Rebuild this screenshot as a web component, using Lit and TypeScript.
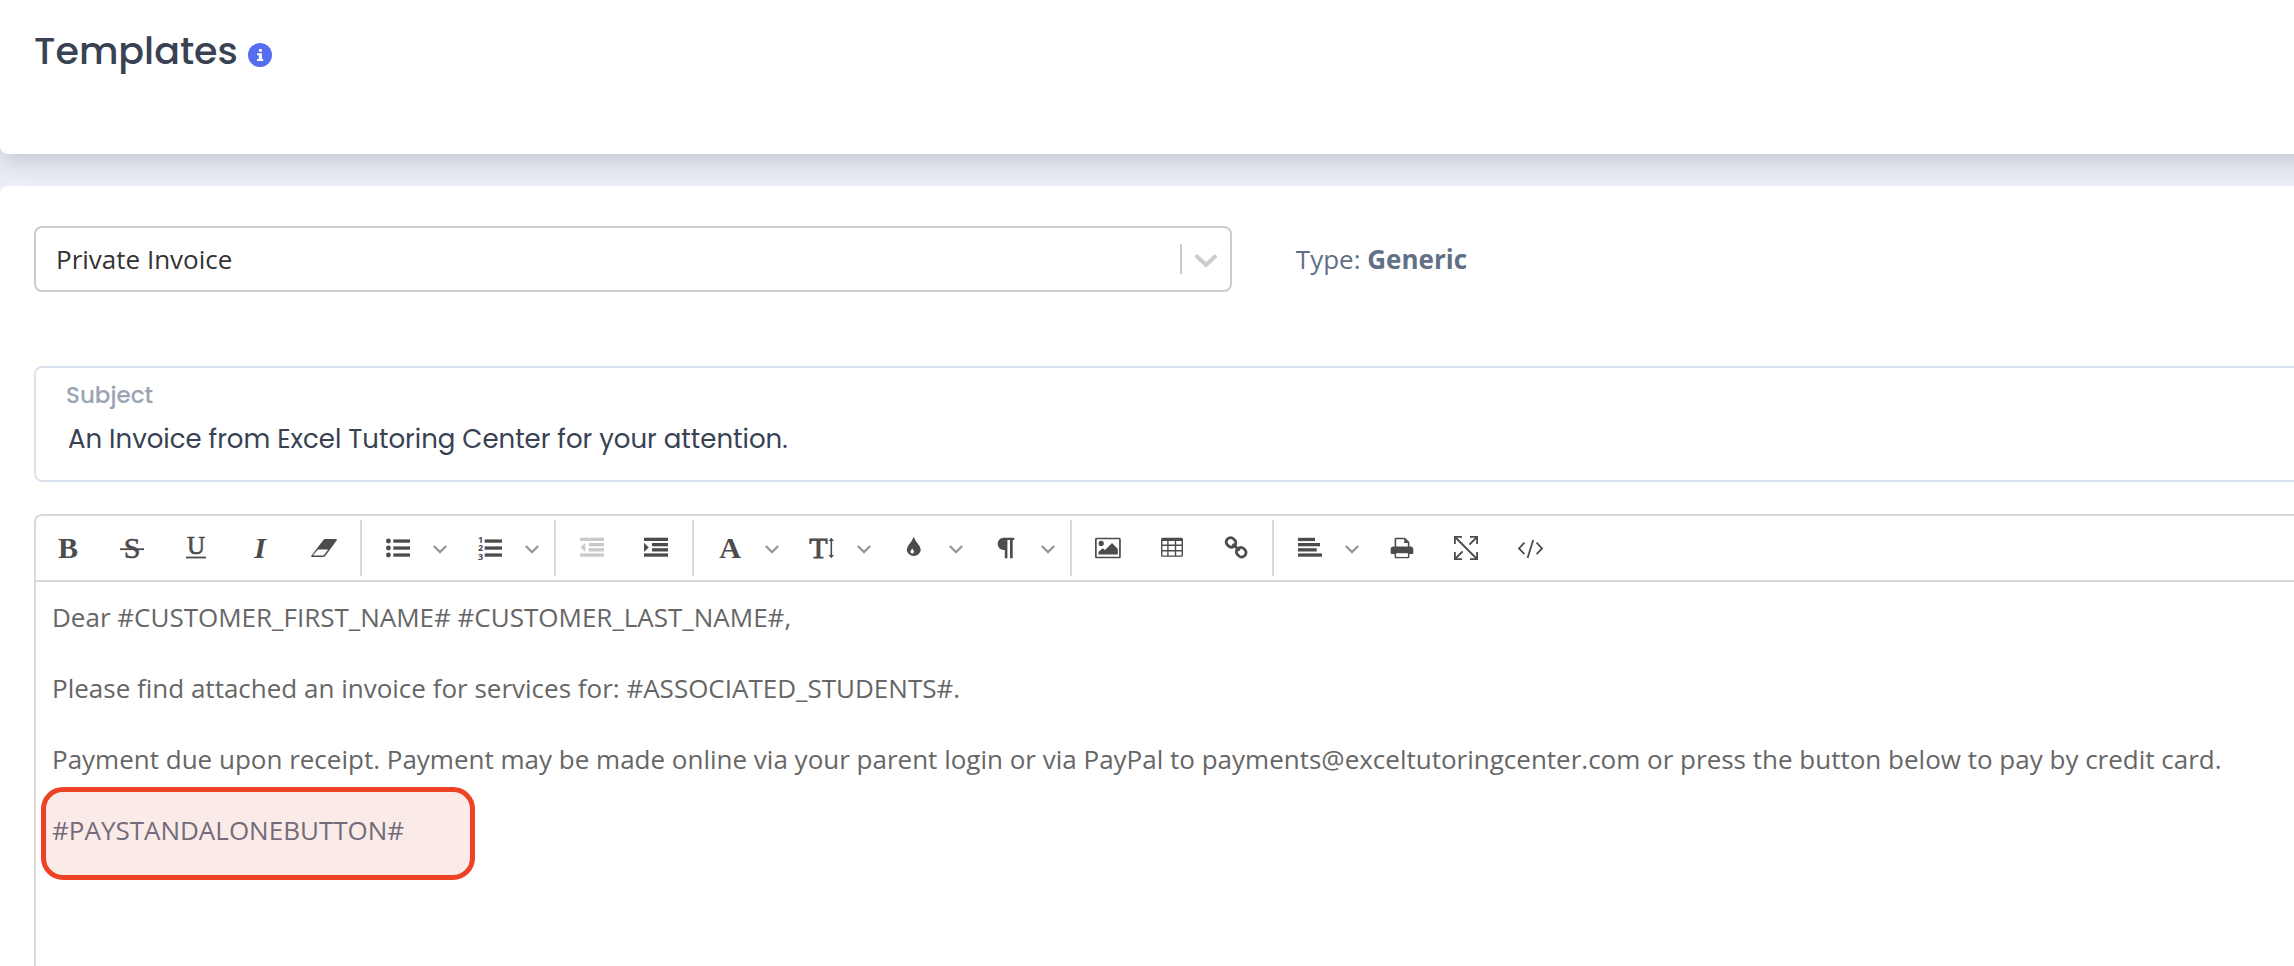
import { LitElement, html, svg, css, nothing } from "lit";
import type { SVGTemplateResult } from "lit";
import { customElement, property, state } from "lit/decorators.js";

interface Tool {
  label: string;
  icon: SVGTemplateResult;
  menu?: boolean;
  disabled?: boolean;
}

// Icons are drawn on a 40 x 40 grid whose origin is the centre of the button.
const bars = (rows: number[][]) =>
  rows.map(([x, y, w]) => svg`<rect x=${x} y=${y} width=${w} height="3.3"></rect>`);

const glyph = (text: string, style: string, y = 10) =>
  svg`<text class=${style} x="0" y=${y} text-anchor="middle">${text}</text>`;

const icons = {
  bold: svg`${glyph("B", "serif bold")}`,
  strike: svg`${glyph("S", "serif")}<rect x="-12" y="0.3" width="24" height="1.8"></rect>`,
  underline: svg`${glyph("U", "serif small", 6)}<rect x="-10" y="8.6" width="20" height="1.8"></rect>`,
  italic: svg`${glyph("I", "serif bold italic")}`,
  eraser: svg`
    <path d="M1.5-9H12Q13.6-9 12.6-7.4L1.6 7.4Q.6 9-1.2 9H-11.8Q-13.6 9-12.4 7.4L-1-7.6Q0-9 1.5-9Z"></path>
    <path class="paper" d="M-6 1.6H3.4Q4 1.6 3.6 2.2L.2 6.8Q-.3 7.4-1 7.4H-10.4Q-11 7.4-10.6 6.8Z"></path>`,
  bullets: svg`
    <circle cx="-9.6" cy="-7" r="2.4"></circle><circle cx="-9.6" cy="0" r="2.4"></circle>
    <circle cx="-9.6" cy="7" r="2.4"></circle>
    ${bars([[-4.7, -8.6, 16.7], [-4.7, -1.6, 16.7], [-4.7, 5.4, 16.7]])}`,
  numbers: svg`
    <text class="digit" x="-12" y="-5.4">1</text><text class="digit" x="-12" y="3.3">2</text>
    <text class="digit" x="-12" y="12">3</text>
    ${bars([[-5.3, -8.6, 17.3], [-5.3, -1.6, 17.3], [-5.3, 5.4, 17.3]])}`,
  outdent: svg`
    ${bars([[-12, -10.3, 24], [-3.3, -5, 15.3], [-3.3, 0.2, 15.3], [-12, 5.4, 24]])}
    <path d="M-11.3-.6-6.7-5.2V4Z"></path>`,
  indent: svg`
    ${bars([[-12, -10.3, 24], [-4, -5, 16], [-4, 0.2, 16], [-12, 5.4, 24]])}
    <path d="M-7.2-.6-12-5.2V4Z"></path>`,
  font: svg`${glyph("A", "serif bold")}`,
  size: svg`
    <text class="serif medium" x="-3.6" y="10" text-anchor="middle">T</text>
    <path d="M9.3-10.3 12-7H10.1V7H12L9.3 10.3 6.6 7H8.5V-7H6.6Z"></path>`,
  color: svg`
    <path d="M-.3-11.3Q1-7.6 4.4-3.6 6.8-.7 6.8 1.9A7.1 6.8 0 0 1-7.3 1.9Q-7.3-.7-5-3.6-1.6-7.6-.3-11.3Z"></path>
    <path class="paper" d="M-1.8.2Q-1.4 1.4-.3 2.7A1.8 1.8 0 1 1-3.3 2.7Q-2.2 1.4-1.8.2Z"></path>`,
  paragraph: svg`
    <path d="M8.3-10.3V-8H6.7V10.3H4V-8H1.4V10.3H-1.2V2H-2.6A5.7 6.1 0 0 1-2.6-10.3Z"></path>`,
  image: svg`
    <path fill-rule="evenodd" d="M-11.5-10.3H11.3Q12.8-10.3 12.8-8.8V8.8Q12.8 10.3 11.3 10.3H-11.5Q-13 10.3-13 8.8V-8.8Q-13-10.3-11.5-10.3ZM-11.3-8.7V8.7H11.1V-8.7Z"></path>
    <circle cx="-6.8" cy="-4.6" r="2.6"></circle>
    <path d="M-9.6 6.6V4L-5.3.2-3 2 4-4.9 9.8 1V6.6Z"></path>`,
  table: svg`
    <path fill-rule="evenodd" d="M-9.5-10.2H9.5Q11-10.2 11-8.7V7.3Q11 8.8 9.5 8.8H-9.5Q-11 8.8-11 7.3V-8.7Q-11-10.2-9.5-10.2ZM-9.6-7V-3.4H-4.8V-7ZM-3.4-7V-3.4H2.8V-7ZM4.2-7V-3.4H9.6V-7ZM-9.6-2V2H-4.8V-2ZM-3.4-2V2H2.8V-2ZM4.2-2V2H9.6V-2ZM-9.6 3.4V7.4H-4.8V3.4ZM-3.4 3.4V7.4H2.8V3.4ZM4.2 3.4V7.4H9.6V3.4Z"></path>`,
  link: svg`
    <g class="line" stroke-width="2.8">
      <rect x="-4.9" y="-4.3" width="9.8" height="8.6" rx="4" transform="translate(-5 -5.6) rotate(45)"></rect>
      <rect x="-4.9" y="-4.3" width="9.8" height="8.6" rx="4" transform="translate(5.2 4.2) rotate(45)"></rect>
      <path d="M-3.4-4 3.6 2.6"></path>
    </g>`,
  align: svg`${bars([[-12, -10.2, 17], [-12, -5, 22], [-12, 0.2, 18.7], [-12, 5.4, 24]])}`,
  print: svg`
    <path d="M-9-1.5H9Q11.3-1.5 11.3 1V5Q11.3 6 10.3 6H-10.3Q-11.3 6-11.3 5V1Q-11.3-1.5-9-1.5Z"></path>
    <path fill-rule="evenodd" d="M-7.4 0V-9Q-7.4-10.3-6.2-10.3H3L7.4-6V0H5.8V-5H2.2V-8.7H-5.8V0Z"></path>
    <path fill-rule="evenodd" d="M-7.4 3.6H7.4V9.2Q7.4 10.3 6.3 10.3H-6.3Q-7.4 10.3-7.4 9.2ZM-5.8 5V8.7H5.8V5Z"></path>
    <path class="paper" d="M-5.8 5.2H5.8V8.7H-5.8Z"></path>`,
  fullscreen: svg`
    <g class="line" stroke-width="1.8">
      <path d="M-11.1-4V-11.1H-4M4-11.1H11.1V-4M11.1 4V11.1H4M-4 11.1H-11.1V4"></path>
      <path d="M-11-11 11 11M11-11 3.4-3.4M-11 11-3.4 3.4"></path>
    </g>`,
  code: svg`
    <g class="line" stroke-width="1.8">
      <path d="M-5.6-5.4-11 .4-5.6 6.2M6.6-5.4 12 .4 6.6 6.2M3.2-8-2.4 10"></path>
    </g>`,
};

const toolGroups: Tool[][] = [
  [
    { label: "Bold", icon: icons.bold },
    { label: "Strikethrough", icon: icons.strike },
    { label: "Underline", icon: icons.underline },
    { label: "Italic", icon: icons.italic },
    { label: "Clear formatting", icon: icons.eraser },
  ],
  [
    { label: "Bulleted list", icon: icons.bullets, menu: true },
    { label: "Numbered list", icon: icons.numbers, menu: true },
  ],
  [
    { label: "Decrease indent", icon: icons.outdent, disabled: true },
    { label: "Increase indent", icon: icons.indent },
  ],
  [
    { label: "Font", icon: icons.font, menu: true },
    { label: "Font size", icon: icons.size, menu: true },
    { label: "Text colour", icon: icons.color, menu: true },
    { label: "Paragraph format", icon: icons.paragraph, menu: true },
  ],
  [
    { label: "Insert image", icon: icons.image },
    { label: "Insert table", icon: icons.table },
    { label: "Insert link", icon: icons.link },
  ],
  [
    { label: "Align", icon: icons.align, menu: true },
    { label: "Print", icon: icons.print },
    { label: "Full screen", icon: icons.fullscreen },
    { label: "Source", icon: icons.code },
  ],
];

@customElement("editor-toolbar")
export class EditorToolbar extends LitElement {
  @property({ attribute: false }) groups: Tool[][] = [];

  static styles = css`
    :host {
      display: flex;
      border-bottom: 2px solid #d9d9d9;
    }
    .group {
      display: flex;
      height: 64px;
    }
    .group + .group::before {
      content: "";
      width: 2px;
      margin: 4px;
      background: #d9d9d9;
    }
    button {
      display: flex;
      align-items: center;
      justify-content: center;
      width: 64px;
      padding: 0;
      border: 0;
      background: none;
      color: #4c4c4c;
      cursor: pointer;
    }
    button.arrow {
      width: 28px;
      padding-right: 8px;
      color: #999;
    }
    button:disabled {
      color: #c9c9c9;
      cursor: default;
    }
    button:not(:disabled):hover {
      background: #f4f4f4;
    }
    svg {
      flex: none;
      width: 40px;
      height: 40px;
      fill: currentColor;
    }
    .arrow svg {
      width: 20px;
    }
    .paper {
      fill: #fff;
    }
    .line {
      fill: none;
      stroke: currentColor;
    }
    .serif {
      font: 30px "Liberation Serif", serif;
      stroke: currentColor;
      stroke-width: 0.6px;
    }
    .serif.small {
      font-size: 25px;
    }
    .serif.medium {
      stroke-width: 0.9px;
    }
    .serif.bold {
      font-weight: 700;
      stroke: none;
    }
    .serif.italic {
      font-style: italic;
    }
    .digit {
      font: 700 9px "Open Sans", sans-serif;
    }
  `;

  private renderTool(tool: Tool) {
    return html`
      <button type="button" aria-label=${tool.label} ?disabled=${tool.disabled}>
        <svg viewBox="-20 -20 40 40" aria-hidden="true">${tool.icon}</svg>
      </button>
      ${tool.menu
        ? html`<button type="button" class="arrow" aria-label="${tool.label} options">
            <svg viewBox="-10 -20 20 40" aria-hidden="true">
              <path class="line" stroke-width="2.4" d="M-6.2-2 0 4 6.2-2"></path>
            </svg>
          </button>`
        : nothing}
    `;
  }

  render() {
    return this.groups.map(
      (group) => html`<div class="group">${group.map((tool) => this.renderTool(tool))}</div>`
    );
  }
}

@customElement("app-root")
export class AppRoot extends LitElement {
  @state() private subject = "An Invoice from Excel Tutoring Center for your attention.";

  static styles = css`
    :host {
      display: flex;
      flex-direction: column;
      gap: 32px;
      box-sizing: border-box;
      min-height: 100vh;
      overflow: hidden;
      background: #e9eef7;
      font-family: "Open Sans", sans-serif;
      font-size: 26px;
      line-height: 36px;
    }
    * {
      box-sizing: border-box;
    }
    .header {
      display: flex;
      gap: 10px;
      height: 154px;
      margin-right: -40px;
      padding: 26px 34px;
      border-radius: 0 0 0 8px;
      background: #fff;
      box-shadow: 0 8px 24px rgba(40, 40, 50, 0.19);
      color: #384252;
    }
    h1 {
      margin: 0;
      font: 500 38px/50px Poppins, Inter, sans-serif;
    }
    .info {
      align-self: flex-start;
      width: 24px;
      height: 24px;
      margin-top: 17px;
      padding: 0;
      border: 0;
      border-radius: 50%;
      background: #556ef0;
      cursor: pointer;
    }
    .info svg {
      display: block;
      fill: #fff;
    }
    .card {
      position: relative;
      flex: 1;
      display: flex;
      flex-direction: column;
      padding: 40px 0 0 34px;
      border-radius: 8px 0 0 0;
      background: #fff;
    }
    .row {
      display: grid;
      grid-template-columns: 6fr 5fr;
      gap: 64px;
      align-items: center;
      margin-bottom: 74px;
    }
    .picker {
      display: grid;
      align-items: center;
    }
    .picker > * {
      grid-area: 1 / 1;
    }
    select {
      appearance: none;
      width: 100%;
      height: 66px;
      padding: 0 64px 0 20px;
      border: 2px solid #ccc;
      border-radius: 8px;
      background: #fff;
      color: #333;
      font: inherit;
    }
    .indicator {
      display: flex;
      justify-self: end;
      gap: 12px;
      padding-right: 14px;
      pointer-events: none;
    }
    .indicator::before {
      content: "";
      width: 2px;
      background: #ccc;
    }
    .indicator path {
      fill: none;
      stroke: #ccc;
      stroke-width: 4px;
      stroke-linecap: round;
    }
    .type {
      color: #627086;
    }
    .field {
      display: block;
      height: 116px;
      margin-bottom: 32px;
      padding: 9px 30px;
      border: 2px solid #dbe4ee;
      border-right: 0;
      border-radius: 8px 0 0 8px;
      font-family: Poppins, Inter, sans-serif;
    }
    .caption {
      display: block;
      color: #9aa4b2;
      font-size: 23px;
      font-weight: 500;
    }
    .field input {
      display: block;
      width: 100%;
      height: 52px;
      padding: 0 2px;
      border: 0;
      outline: 0;
      background: none;
      color: #384252;
      font: inherit;
    }
    .editor {
      flex: 1;
      border: 2px solid #d9d9d9;
      border-width: 2px 0 0 2px;
      border-radius: 8px 0 0 0;
    }
    .content {
      padding: 17px 16px 0;
      outline: 0;
      color: #666;
    }
    p {
      margin: 0 0 35px;
    }
    .marked {
      position: relative;
      z-index: 0;
      color: #736c7a;
    }
    .highlight {
      position: absolute;
      z-index: -1;
      inset: -25px auto -32px -11px;
      width: 434px;
      border: 5px solid #ee4227;
      border-radius: 22px;
      background: #fbebe8;
      pointer-events: none;
    }
  `;

  render() {
    return html`
      <header class="header">
        <h1>Templates</h1>
        <button class="info" type="button" aria-label="About templates">
          <svg viewBox="0 0 24 24" width="24" height="24" aria-hidden="true">
            <rect x="10.8" y="6" width="3.2" height="2.8" rx="1"></rect>
            <path d="M9 10.2H14V16H15.2V18H9V16H10.8V12.2H9Z"></path>
          </svg>
        </button>
      </header>
      <main class="card">
        <div class="row">
          <div class="picker">
            <select aria-label="Template">
              <option>Private Invoice</option>
            </select>
            <span class="indicator">
              <svg width="24" height="30" viewBox="-12 -15 24 30" aria-hidden="true">
                <path d="M-9-2.5 0 6 9-2.5"></path>
              </svg>
            </span>
          </div>
          <div class="type">Type: <strong>Generic</strong></div>
        </div>
        <label class="field">
          <span class="caption">Subject</span>
          <input
            type="text"
            .value=${this.subject}
            @input=${(e: Event) => (this.subject = (e.target as HTMLInputElement).value)}
          />
        </label>
        <section class="editor">
          <editor-toolbar role="toolbar" aria-label="Formatting" .groups=${toolGroups}></editor-toolbar>
          <div class="content" role="textbox" aria-multiline="true" aria-label="Message" contenteditable="true" spellcheck="false">
            <p>Dear #CUSTOMER_FIRST_NAME# #CUSTOMER_LAST_NAME#,</p>
            <p>Please find attached an invoice for services for: #ASSOCIATED_STUDENTS#.</p>
            <p>Payment due upon receipt. Payment may be made online via your parent login or via PayPal to payments@exceltutoringcenter.com or press the button below to pay by credit card.</p>
            <p class="marked">#PAYSTANDALONEBUTTON#<span class="highlight"></span></p>
          </div>
        </section>
      </main>
    `;
  }
}
